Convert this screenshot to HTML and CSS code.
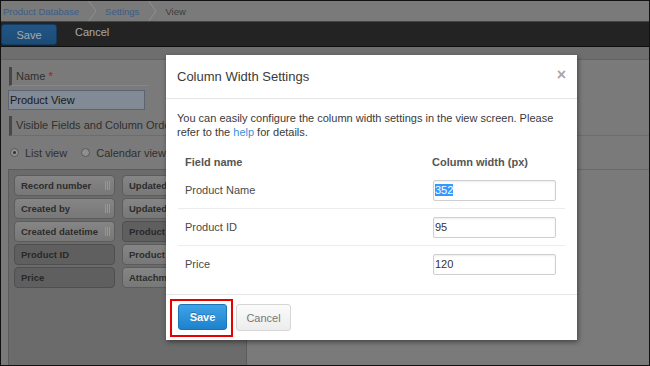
FILE: index.html
```html
<!DOCTYPE html>
<html lang="en">
<head>
    <meta charset="UTF-8">
    <title>View Settings - Column Width</title>
    <link rel="stylesheet" href="styles.css">
</head>
<body>
    <div class="screen">
        <!-- Breadcrumb -->
        <div class="crumbs">
            <span class="crumb link">Product Database</span>
            <svg class="crumb-sep" width="26" height="20" viewBox="0 0 26 20"><path d="M9 -1 L17 10 L9 21" fill="none" stroke="#dcdcdc" stroke-width="1"/></svg>
            <span class="crumb link">Settings</span>
            <svg class="crumb-sep" width="26" height="20" viewBox="0 0 26 20"><path d="M9 -1 L17 10 L9 21" fill="none" stroke="#dcdcdc" stroke-width="1"/></svg>
            <span class="crumb">View</span>
        </div>

        <!-- Toolbar -->
        <div class="toolbar">
            <button class="tb-save">Save</button>
            <button class="tb-cancel">Cancel</button>
        </div>
        <div class="band"></div>

        <!-- View form -->
        <div class="form">
            <div class="label">Name <span class="req">*</span></div>
            <div class="text-input">Product View</div>
            <div class="label wide">Visible Fields and Column Order</div>
            <div class="radios">
                <span class="radio checked"></span><span class="radio-text">List view</span>
                <span class="radio"></span><span class="radio-text">Calendar view</span>
            </div>
            <div class="fields-row">
                <div class="field-panel">
                    <div class="chip-col">
                        <div class="chip">Record number<span class="grip"></span></div>
                        <div class="chip">Created by<span class="grip"></span></div>
                        <div class="chip">Created datetime<span class="grip"></span></div>
                        <div class="chip used">Product ID</div>
                        <div class="chip used">Price</div>
                    </div>
                    <div class="chip-col">
                        <div class="chip">Updated by<span class="grip"></span></div>
                        <div class="chip">Updated datetime<span class="grip"></span></div>
                        <div class="chip used">Product Name</div>
                        <div class="chip">Product Code<span class="grip"></span></div>
                        <div class="chip">Attachment<span class="grip"></span></div>
                    </div>
                </div>
                <div class="preview"></div>
            </div>
        </div>

        <div class="overlay"></div>

        <!-- Dialog -->
        <div class="modal">
            <div class="modal-header">
                <span class="modal-title">Column Width Settings</span>
                <span class="modal-close">&times;</span>
            </div>
            <div class="modal-body">
                <p>You can easily configure the column width settings in the view screen. Please<br>refer to the <a href="#">help</a> for details.</p>
                <div class="width-table">
                    <div class="wt-row wt-head">
                        <div class="wt-name">Field name</div>
                        <div class="wt-width">Column width (px)</div>
                    </div>
                    <div class="wt-row">
                        <div class="wt-name">Product Name</div>
                        <div class="wt-width"><div class="num-input"><span class="selected">352</span></div></div>
                    </div>
                    <div class="wt-row">
                        <div class="wt-name">Product ID</div>
                        <div class="wt-width"><div class="num-input">95</div></div>
                    </div>
                    <div class="wt-row last">
                        <div class="wt-name">Price</div>
                        <div class="wt-width"><div class="num-input">120</div></div>
                    </div>
                </div>
            </div>
            <div class="modal-footer">
                <button class="btn-save">Save</button>
                <button class="btn-cancel">Cancel</button>
            </div>
            <div class="highlight"></div>
        </div>
    </div>
</body>
</html>
```

FILE: styles.css
```css
/* Global */
body {
    margin: 0;
    font-family: "Liberation Sans", Arial, sans-serif;
    font-size: 11px;
    color: #333;
}

.screen {
    position: relative;
    width: 650px;
    height: 366px;
    box-sizing: border-box;
    border: 1px solid #111;
    background: #bcbcbc;
    overflow: hidden;
}

/* Breadcrumb */
.crumbs {
    display: flex;
    align-items: center;
    height: 20px;
    padding-left: 2px;
    font-size: 9.5px;
}

.crumb {
    color: #5e5e5e;
}

.crumb.link {
    color: #5b8fd0;
}

/* Toolbar */
.toolbar {
    display: flex;
    align-items: flex-start;
    box-sizing: border-box;
    height: 26px;
    padding-top: 2px;
    background: #363636;
    border-top: 1px solid #6a6a6a;
    border-bottom: 1px solid #161616;
}

.toolbar button {
    font-family: inherit;
    font-size: 11px;
    cursor: pointer;
}

.tb-save {
    width: 56px;
    height: 21px;
    background: linear-gradient(#3584cc, #2a74b8);
    border: 1px solid #1f5c96;
    border-radius: 3px;
    color: #fff;
}

.tb-cancel {
    margin-left: 18px;
    margin-top: 2px;
    padding: 0;
    background: none;
    border: none;
    color: #fff;
}

.band {
    height: 12px;
    background: #a9a9a9;
    border-bottom: 1px solid #9a9a9a;
}

/* Form */
.form {
    padding: 7px 0 0 7px;
}

.label {
    width: 132px;
    height: 18px;
    line-height: 18px;
    margin-left: 1px;
    padding-left: 4px;
    border-left: 3px solid #6e6e6e;
    border-bottom: 1px solid #cfcfcf;
    color: #4a4a4a;
    font-size: 11px;
}

.label .req {
    color: #d93a3a;
}

.label.wide {
    width: auto;
    height: 19px;
    line-height: 19px;
    margin-top: 6px;
    border-bottom-color: #a8a8a8;
}

.text-input {
    width: 134px;
    height: 18px;
    line-height: 18px;
    margin-top: 4px;
    padding-left: 1px;
    background: #c6d5e5;
    border: 1px solid #8c9cae;
    color: #2a2a2a;
}

.radios {
    display: flex;
    align-items: center;
    height: 33px;
    padding-left: 2px;
    color: #4a4a4a;
}

.radio {
    width: 7px;
    height: 7px;
    border: 1px solid #8a8a8a;
    border-radius: 50%;
    background: #dcdcdc;
    position: relative;
}

.radio.checked::after {
    content: "";
    position: absolute;
    left: 2px;
    top: 2px;
    width: 3px;
    height: 3px;
    border-radius: 50%;
    background: #4a4a4a;
}

.radio-text {
    margin: 0 14px 0 6px;
}

/* Field chips */
.fields-row {
    display: flex;
    height: 200px;
}

.field-panel {
    display: flex;
    gap: 7px;
    width: 232px;
    padding: 5px 0 0 5px;
    background: #a5a5a5;
    border: 1px solid #8e8e8e;
}

.preview {
    flex: 1;
    border-top: 1px solid #a0a0a0;
}

.chip-col {
    display: flex;
    flex-direction: column;
    gap: 2px;
}

.chip {
    display: flex;
    align-items: center;
    justify-content: space-between;
    width: 89px;
    height: 19px;
    padding: 0 4px 0 6px;
    background: linear-gradient(#cdcdcd, #b8b8b8);
    border: 1px solid #8e8e8e;
    border-radius: 4px;
    color: #454545;
    font-size: 9.5px;
    font-weight: bold;
    white-space: nowrap;
    overflow: hidden;
}

.chip.used {
    background: #939393;
    border-color: #7a7a7a;
    color: #3e3e3e;
}

.grip {
    flex: none;
    width: 5px;
    height: 9px;
    background: repeating-linear-gradient(to right, #e6e6e6 0 1px, transparent 1px 2px);
}

/* Overlay + dialog */
.overlay {
    position: absolute;
    inset: 0;
    background: rgba(0, 0, 0, 0.35);
}

.modal {
    position: absolute;
    left: 165px;
    top: 54px;
    width: 411px;
    height: 285px;
    background: #fff;
    box-shadow: 1px 2px 5px rgba(0, 0, 0, 0.45);
    display: flex;
    flex-direction: column;
}

.modal-header {
    display: flex;
    align-items: center;
    justify-content: space-between;
    height: 43px;
    padding: 0 11px;
    border-bottom: 1px solid #e6e6e6;
}

.modal-title {
    font-size: 13px;
    color: #3a3a3a;
    margin-top: -1px;
}

.modal-close {
    font-size: 16px;
    font-weight: bold;
    color: #a8a8a8;
    margin-top: -4px;
}

.modal-body {
    padding: 12px 12px 12px 11px;
    border-bottom: 1px solid #e6e6e6;
}

.modal-body p {
    margin: 0 0 13px;
    line-height: 14px;
    color: #3a3a3a;
}

.modal-body a {
    color: #3b8fd8;
    text-decoration: none;
}

.width-table {
    width: 387px;
    margin-left: 1px;
}

.wt-row {
    display: flex;
    align-items: center;
    height: 36px;
    border-bottom: 1px solid #ececec;
    color: #4a4a4a;
}

.wt-row.last {
    border-bottom: none;
}

.wt-row.wt-head {
    height: 20px;
    border-bottom: none;
    font-weight: bold;
    color: #555;
}

.wt-name {
    width: 240px;
    padding-left: 7px;
}

.wt-width {
    flex: 1;
    padding-left: 7px;
}

.wt-row .num-input {
    margin-left: 1px;
}

.num-input {
    width: 120px;
    height: 19px;
    line-height: 19px;
    padding-left: 1px;
    border: 1px solid #cfcfcf;
    border-radius: 2px;
    box-shadow: inset 0 1px 2px rgba(0, 0, 0, 0.08);
    color: #333;
}

.selected {
    background: #3399ff;
    color: #fff;
}

.modal-footer {
    display: flex;
    gap: 9px;
    padding: 9px 0 0 12px;
}

.modal-footer button {
    font-family: inherit;
    font-size: 11px;
    border-radius: 3px;
    cursor: pointer;
}

.btn-save {
    width: 49px;
    height: 26px;
    background: linear-gradient(#3fa3e8, #1c82cc);
    border: 1px solid #1a74b6;
    color: #fff;
    font-weight: bold;
    text-shadow: 0 -1px 0 rgba(0, 0, 0, 0.25);
}

.btn-cancel {
    width: 55px;
    height: 27px;
    background: linear-gradient(#fbfbfb, #ececec);
    border: 1px solid #d6d6d6;
    color: #777;
}

.highlight {
    position: absolute;
    left: 4px;
    top: 244px;
    width: 63px;
    height: 38px;
    box-sizing: border-box;
    border: 2px solid #e60000;
}
```
